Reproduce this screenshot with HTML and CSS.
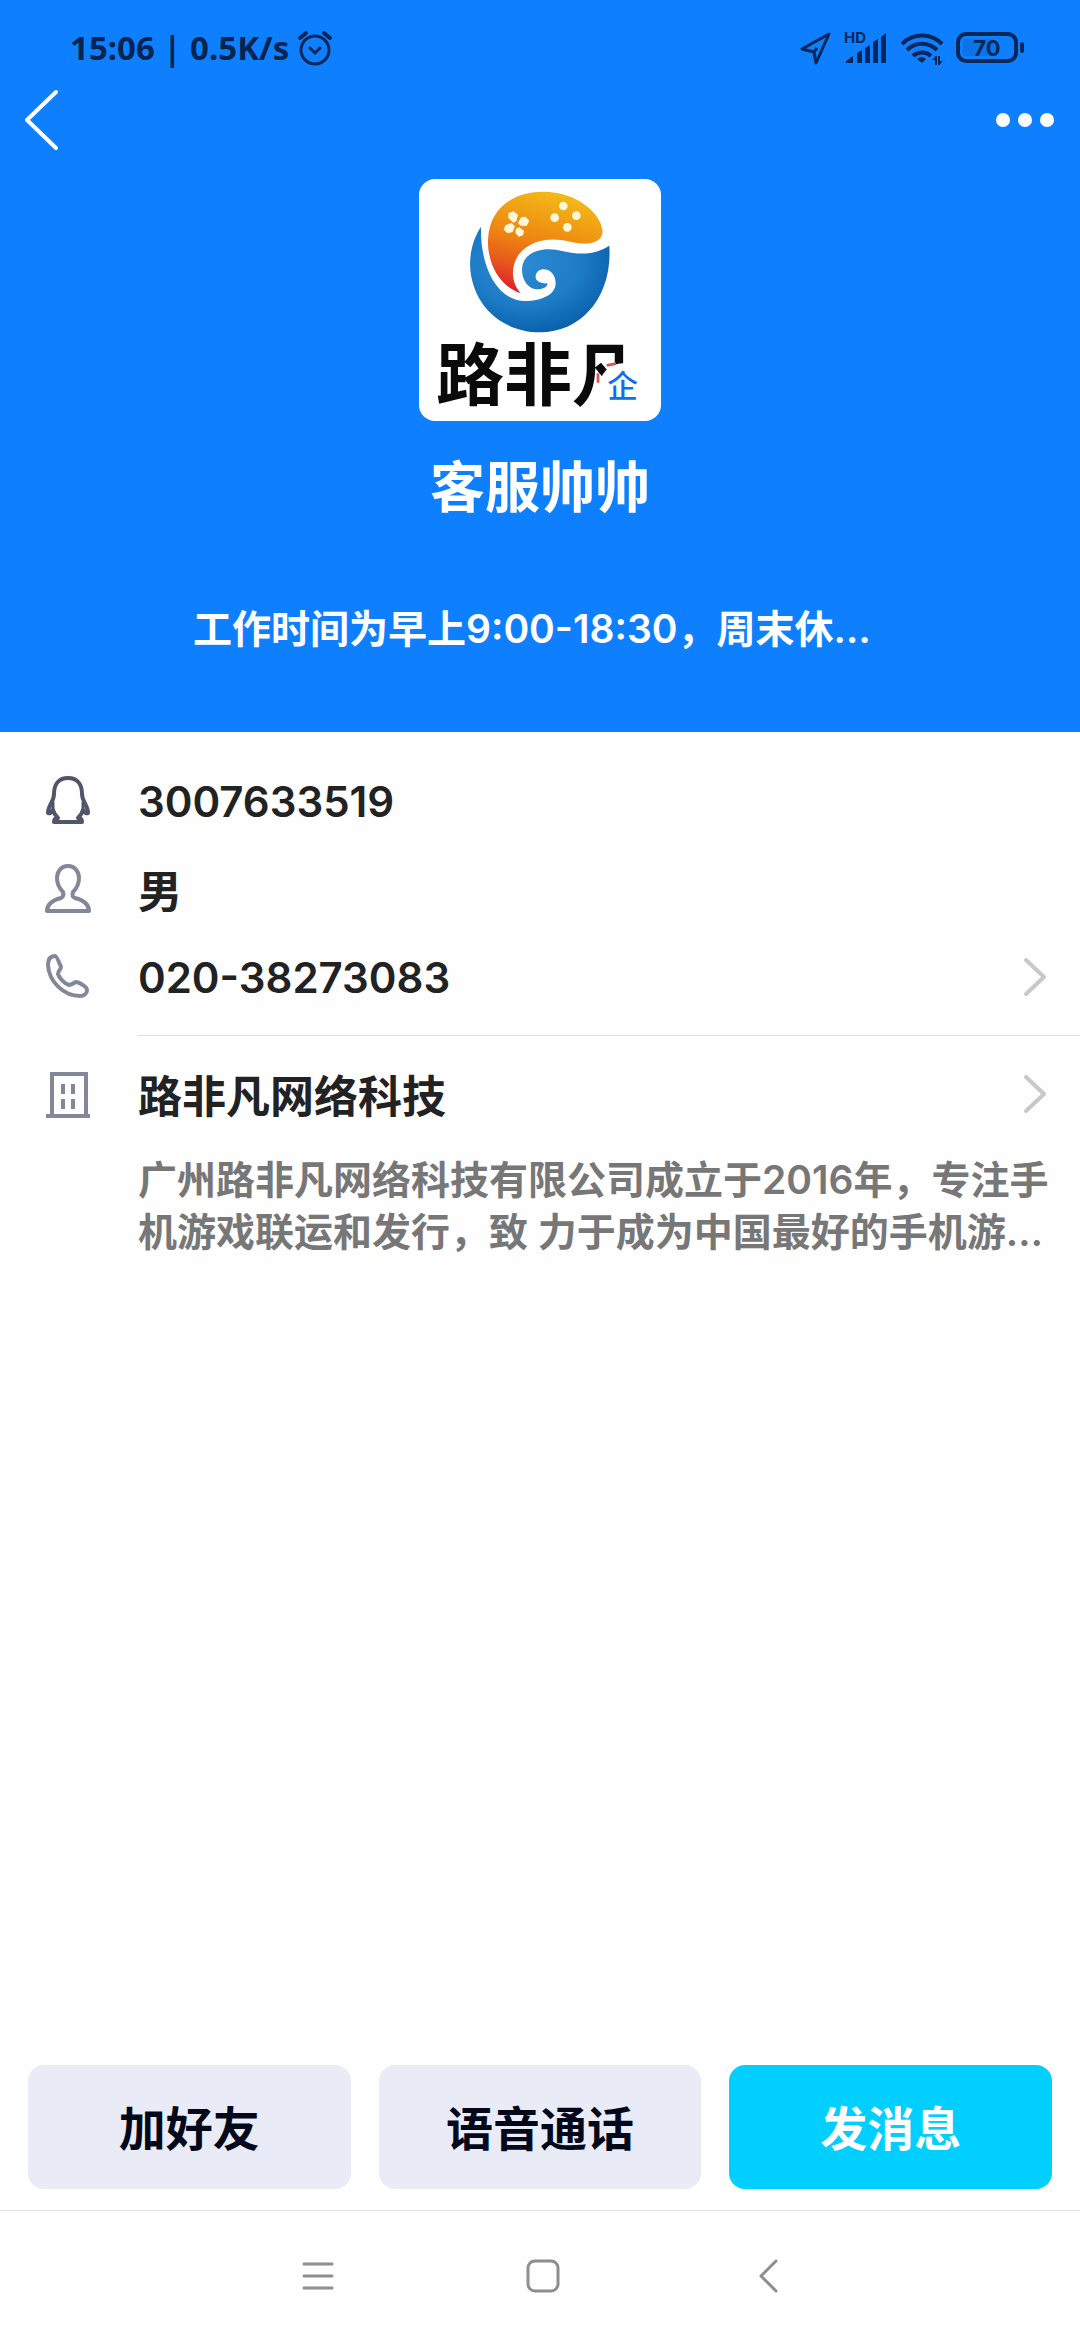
FILE: index.html
```html
<!DOCTYPE html>
<html lang="zh-CN">
<head>
    <meta charset="UTF-8">
    <meta name="viewport" content="width=device-width, initial-scale=1">
    <title>客服帅帅</title>
    <link rel="stylesheet" href="styles.css">
</head>
<body>
<header class="header">
    <div class="status_bar">
        <span class="status_time">15:06 | 0.5K/s</span>
        <svg class="alarm" width="36" height="36" viewBox="0 0 36 36" fill="none" stroke="#062757" stroke-width="3" stroke-linecap="round">
            <circle cx="18" cy="20" r="14"/>
            <path d="M13 18l5 5 5-5"/>
            <path d="M3 8l6-5M33 8l-6-5" stroke-width="4"/>
        </svg>
        <div class="status_icons">
            <svg width="32" height="34" viewBox="0 0 32 34" fill="none" stroke="#062757" stroke-width="3" stroke-linejoin="round">
                <path d="M29 3L2 18l12 3 2 11z"/>
                <path d="M14 21l3-4"/>
            </svg>
            <svg width="44" height="40" viewBox="0 -3 44 40" fill="#062757">
                <text class="hd" x="0" y="12">HD</text>
                <path d="M2 32v-2l7-5v7zM13 22l5-3v13h-5zM21 17l5-3v18h-5zM29 11l5-3v24h-5zM37 6l5-4v30h-5z"/>
            </svg>
            <svg width="44" height="36" viewBox="0 0 44 36" fill="none" stroke="#062757" stroke-width="4">
                <path d="M2 14a28 28 0 0 1 40 0" />
                <path d="M7 20a21 21 0 0 1 30 0"/>
                <path d="M13 26a13 13 0 0 1 18 0"/>
                <path d="M17 29q5-4 9 0l-4 4z" fill="#062757" stroke="none"/>
                <path d="M36 26v9M39 35v-9" stroke-width="2"/>
                <path d="M32 30l4-4v4zM43 31l-4 4v-4z" fill="#062757" stroke="none"/>
            </svg>
            <svg width="70" height="32" viewBox="0 0 70 32">
                <rect x="2" y="2" width="58" height="27" rx="8" fill="none" stroke="#062757" stroke-width="4"/>
                <rect x="7" y="7" width="32" height="17" rx="3" fill="#0b74e8"/>
                <rect x="64" y="10" width="4" height="11" rx="2" fill="#062757"/>
                <text class="battery" x="31" y="24" text-anchor="middle" fill="#062757">70</text>
            </svg>
        </div>
    </div>
    <nav class="top_nav">
        <button class="icon_btn" aria-label="返回">
            <svg width="36" height="62" viewBox="0 0 36 62" fill="none" stroke="#fff" stroke-width="4" stroke-linecap="round" stroke-linejoin="round">
                <path d="M32 3L3 31l29 28"/>
            </svg>
        </button>
        <button class="icon_btn" aria-label="更多">
            <svg width="58" height="14" viewBox="0 0 58 14" fill="#fff">
                <circle cx="7" cy="7" r="7"/><circle cx="29" cy="7" r="7"/><circle cx="51" cy="7" r="7"/>
            </svg>
        </button>
    </nav>
    <div class="profile">
        <svg class="avatar" viewBox="57 57 726 726">
            <defs>
                <linearGradient id="orange" x1="0.6" y1="0" x2="0.3" y2="1">
                    <stop offset="0" stop-color="#f3bb18"/>
                    <stop offset="0.5" stop-color="#ee8411"/>
                    <stop offset="0.75" stop-color="#e8591c"/>
                    <stop offset="1" stop-color="#df1f2b"/>
                </linearGradient>
                <radialGradient id="blue" cx="0.4" cy="0.35" r="0.75">
                    <stop offset="0" stop-color="#2a8ad2"/>
                    <stop offset="0.5" stop-color="#1f7dc8"/>
                    <stop offset="1" stop-color="#0359a4"/>
                </radialGradient>
            </defs>
            <path fill="url(#blue)" d="M243 200C210 250 200 320 222 380C250 465 330 517 420 517C545 517 638 410 628 257C600 275 560 290 490 274C430 256 366 275 366 330C366 365 390 390 415 388C435 386 444 376 442 370C420 372 405 362 407 348C410 316 467 320 467 370C467 410 410 425 370 423C290 418 240 320 243 200Z"/>
            <path fill="url(#orange)" d="M362 400C290 375 262 300 264 240C268 135 350 95 430 95C530 95 605 160 608 215C605 252 560 256 510 245C450 230 390 240 355 285C330 325 335 370 362 400Z"/>
            <g fill="#fff6d8">
                <circle cx="490" cy="138" r="13"/><circle cx="529" cy="167" r="13"/>
                <circle cx="464" cy="173" r="13"/><circle cx="502" cy="202" r="13"/>
                <path d="M325 160l15-6 14 10-5 20-9 4-15-14zM363 172l14-2 11 13-8 14-17 1-9-9zM316 196l18-7 11 10-7 17-15 4-12-11zM348 206l9-5 15 12-3 13-13 4-10-12z"/>
            </g>
            <text class="logo_text" x="108" y="720">路非凡</text>
            <circle cx="668" cy="680" r="70" fill="#fff"/>
            <path d="M620 616l28-5M594 640v28" stroke="#e05050" stroke-width="8" fill="none"/>
            <text class="logo_badge" x="668" y="712" text-anchor="middle">企</text>
        </svg>
        <h1 class="name">客服帅帅</h1>
        <p class="signature">工作时间为早上9:00-18:30，周末休…</p>
    </div>
</header>

<main class="info">
    <div class="row">
        <svg class="row_icon" viewBox="0 0 48 52" fill="none" stroke="#50556a" stroke-width="4" stroke-linejoin="round">
            <path d="M24 3C14 3 10 10 10 19c0 8-6 11-6 19 2 1 4-1 5-3 1 4 3 6 5 8-3 0-4 2-4 4h28c0-2-1-4-4-4 2-2 4-4 5-8 1 2 3 4 5 3 0-8-6-11-6-19 0-9-4-16-14-16z"/>
            <path d="M9 27v9M39 27v9" stroke-width="3"/>
        </svg>
        <span class="value number">3007633519</span>
    </div>
    <div class="row">
        <svg class="row_icon" viewBox="0 0 48 52" fill="none" stroke="#82889a" stroke-width="4" stroke-linejoin="round">
            <path d="M24 3c-7 0-11 6-11 12 0 7 3 11 6 14 1 3 0 5-2 6C9 37 3 41 3 48h42c0-7-6-11-14-13-3-1-3-3-2-6 3-3 6-7 6-14 0-6-4-12-11-12z"/>
        </svg>
        <span class="value">男</span>
    </div>
    <a class="row" href="#phone">
        <svg class="row_icon" viewBox="0 0 48 52" fill="none" stroke="#82889a" stroke-width="4" stroke-linejoin="round">
            <path d="M11 5c-5 0-7 4-7 9 1 17 16 31 32 31 4 0 7-2 7-6 0-3-8-8-11-8-3 1-4 3-7 3-4-1-10-7-11-11 0-4 3-4 3-7-1-2-4-11-6-11z"/>
        </svg>
        <span class="value number">020-38273083</span>
        <svg class="chevron" width="26" height="42" viewBox="0 0 26 42"><path d="M4 4l18 17L4 38"/></svg>
    </a>
    <hr class="divider">
    <a class="row" href="#company">
        <svg class="row_icon" viewBox="0 0 48 52" fill="none" stroke="#82889a" stroke-width="4">
            <path d="M8 47V6h34v41M2 48h44M19 16v10M29 16v10M19 31v10M29 31v10"/>
        </svg>
        <span class="value">路非凡网络科技</span>
        <svg class="chevron" width="26" height="42" viewBox="0 0 26 42"><path d="M4 4l18 17L4 38"/></svg>
    </a>
    <p class="desc">广州路非凡网络科技有限公司成立于2016年，专注手机游戏联运和发行，致 力于成为中国最好的手机游…</p>
</main>

<footer>
    <div class="actions">
        <button class="btn">加好友</button>
        <button class="btn">语音通话</button>
        <button class="btn primary">发消息</button>
    </div>
    <nav class="sys_nav">
        <button class="icon_btn" aria-label="菜单">
            <svg width="34" height="34" viewBox="0 0 34 34" fill="none" stroke="#8e8e8e" stroke-width="3" stroke-linecap="round">
                <path d="M3 5h28M3 17h28M3 29h28"/>
            </svg>
        </button>
        <button class="icon_btn" aria-label="主页">
            <svg width="34" height="34" viewBox="0 0 34 34" fill="none" stroke="#8e8e8e" stroke-width="3">
                <rect x="2" y="2" width="30" height="30" rx="7"/>
            </svg>
        </button>
        <button class="icon_btn" aria-label="后退">
            <svg width="34" height="34" viewBox="0 0 34 34" fill="none" stroke="#8e8e8e" stroke-width="3" stroke-linecap="round" stroke-linejoin="round">
                <path d="M25 2L10 17l15 15"/>
            </svg>
        </button>
    </nav>
</footer>
</body>
</html>
```

FILE: styles.css
```css
* {
    box-sizing: border-box;
}
body {
    display: flex;
    flex-direction: column;
    min-height: 100vh;
    margin: 0;
    background: #fefefe;
    font-family: Inter, "Noto Sans CJK SC", sans-serif;
    font-weight: 600;
}
h1, p {
    margin: 0;
}
svg {
    display: block;
    flex-shrink: 0;
}
.icon_btn {
    padding: 0;
    border: 0;
    background: none;
}

/* header */
.header {
    background: #0e80ff;
    color: #fff;
}
.status_bar {
    display: flex;
    align-items: center;
    height: 72px;
    padding: 24px 54px 0 70px;
}
.status_time {
    font-family: "Noto Sans", sans-serif;
    font-size: 33px;
    font-weight: 700;
    line-height: 48px;
    color: #062450;
}
.alarm {
    margin-left: 8px;
}
.status_icons {
    display: flex;
    align-items: center;
    gap: 12px;
    margin-left: auto;
}
.hd {
    font-size: 15px;
    font-weight: 700;
}
.battery {
    font-size: 22px;
    font-weight: 700;
}
.top_nav {
    display: flex;
    align-items: center;
    justify-content: space-between;
    height: 96px;
    padding: 0 26px 0 24px;
}
.profile {
    padding: 11px 193px 74px;
}
.avatar {
    width: 242px;
    height: 242px;
    margin: 0 auto;
    border-radius: 16px;
    background: #fff;
}
.logo_text {
    font-size: 204px;
    font-weight: 700;
    fill: #0a0a0a;
}
.logo_badge {
    font-size: 92px;
    font-weight: 500;
    fill: #0e6fef;
}
.name {
    margin-top: 33px;
    font-size: 55px;
    font-weight: 600;
    line-height: 66px;
    text-align: center;
}
.signature {
    margin-top: 80px;
    font-size: 39px;
    line-height: 58px;
    white-space: nowrap;
}

/* info list */
.info {
    flex: 1;
    padding-top: 25px;
}
.row {
    display: flex;
    align-items: center;
    height: 88px;
    padding: 0 32px 0 44px;
    color: #222;
    text-decoration: none;
}
.row_icon {
    width: 48px;
    height: 52px;
}
.value {
    flex: 1;
    margin-left: 46px;
    font-size: 44px;
}
.number {
    font-size: 42px;
}
.chevron {
    fill: none;
    stroke: #c8c8c8;
    stroke-width: 4;
    stroke-linecap: round;
    stroke-linejoin: round;
}
.divider {
    height: 1px;
    margin: 14px 0 14px 138px;
    border: 0;
    background: #dedede;
}
.desc {
    margin-top: 16px;
    padding: 0 24px 0 138px;
    font-size: 39px;
    line-height: 52px;
    color: #777;
}

/* bottom */
.actions {
    display: flex;
    gap: 28px;
    padding: 0 28px 21px;
}
.btn {
    flex: 1;
    height: 124px;
    padding: 0 0 4px;
    border: 0;
    border-radius: 16px;
    background: #e9ecf6;
    color: #03081a;
    font-family: inherit;
    font-size: 47px;
    font-weight: 600;
}
.primary {
    background: #00cfff;
    color: #fff;
}
.sys_nav {
    display: flex;
    align-items: center;
    justify-content: center;
    gap: 191px;
    height: 130px;
    padding-left: 6px;
    border-top: 1px solid #e2e2e4;
}
```
